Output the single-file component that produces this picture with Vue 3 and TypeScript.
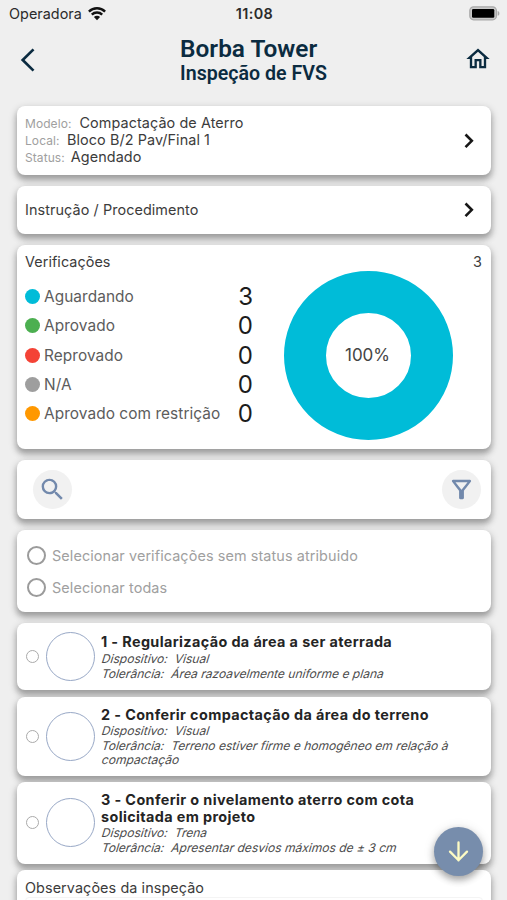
<script setup lang="ts">
interface Info { label: string; value: string; gap: number }
interface Status { label: string; count: number; color: string }
interface Check { title: string[]; device: string; tolerance: string[]; size: string }

const info: Info[] = [
  { label: 'Modelo:', value: 'Compactação de Aterro', gap: 8 },
  { label: 'Local:', value: 'Bloco B/2 Pav/Final 1', gap: 7.5 },
  { label: 'Status:', value: 'Agendado', gap: 6 },
]
const statuses: Status[] = [
  { label: 'Aguardando', count: 3, color: '#00bcd8' },
  { label: 'Aprovado', count: 0, color: '#4caf50' },
  { label: 'Reprovado', count: 0, color: '#f44336' },
  { label: 'N/A', count: 0, color: '#9e9e9e' },
  { label: 'Aprovado com restrição', count: 0, color: '#ff9800' },
]
const selectors: string[] = ['Selecionar verificações sem status atribuido', 'Selecionar todas']
const checks: Check[] = [
  { title: ['1 - Regularização da área a ser aterrada'], device: 'Visual', tolerance: ['Área razoavelmente uniforme e plana'], size: 'short' },
  { title: ['2 - Conferir compactação da área do terreno'], device: 'Visual', tolerance: ['Terreno estiver firme e homogêneo em relação à', 'compactação'], size: 'medium' },
  { title: ['3 - Conferir o nivelamento aterro com cota', 'solicitada em projeto'], device: 'Trena', tolerance: ['Apresentar desvios máximos de ± 3 cm'], size: 'tall' },
]
</script>

<template>
  <div class="screen">
    <div class="statusbar">
      <div class="carrier">
        <span>Operadora</span>
        <svg width="20" height="15" viewBox="0 0 20 15">
          <path d="M1.9 5.6a11.6 11.6 0 0 1 16.2 0M4.8 8.7a7.4 7.4 0 0 1 10.4 0" fill="none" stroke="#111" stroke-width="2.4" />
          <path d="M10 14.2 6.9 11.1a4.4 4.4 0 0 1 6.2 0z" fill="#111" />
        </svg>
      </div>
      <span class="clock">11:08</span>
      <svg class="battery" width="31" height="15" viewBox="0 0 31 15">
        <rect x=".8" y=".8" width="26.6" height="13" rx="3.8" fill="#c9c9c9" stroke="#a9a9a9" stroke-width="1.2" />
        <path d="M28.6 5v4.8c2.4-.6 2.4-4.2 0-4.8z" fill="#aaa" />
        <rect x="3" y="3" width="22.3" height="8.8" rx="1.3" fill="#000" />
      </svg>
    </div>

    <header class="appbar">
      <svg class="back" width="16" height="24" viewBox="0 0 16 24"><path d="M13.5 1.4 2.7 12l10.8 10.6" fill="none" stroke="#0b2b40" stroke-width="2.7" /></svg>
      <div class="titles">
        <h1>Borba Tower</h1>
        <h2>Inspeção de FVS</h2>
      </div>
      <svg class="home" width="28" height="28" viewBox="0 0 24 24"><path d="m12 5.69 5 4.5V18h-2v-6H9v6H7v-7.81l5-4.5M12 3 2 12h3v8h6v-6h2v6h6v-8h3L12 3z" fill="#0b2b40" /></svg>
    </header>

    <main class="cards">
      <section class="card summary">
        <div>
          <div v-for="row in info" :key="row.label" class="info" :style="{ columnGap: row.gap + 'px' }">
            <span class="key">{{ row.label }}</span><span class="value">{{ row.value }}</span>
          </div>
        </div>
        <svg width="10" height="16" viewBox="0 0 10 16"><path d="m1.5 1.5 6.3 6.3-6.3 6.3" fill="none" stroke="#171717" stroke-width="2.6" /></svg>
      </section>

      <section class="card procedure">
        <span class="value">Instrução / Procedimento</span>
        <svg width="10" height="16" viewBox="0 0 10 16"><path d="m1.5 1.5 6.3 6.3-6.3 6.3" fill="none" stroke="#171717" stroke-width="2.6" /></svg>
      </section>

      <section class="card stats">
        <div class="stats-head"><span>Verificações</span><span>3</span></div>
        <div class="stats-body">
          <div class="legend">
            <div v-for="s in statuses" :key="s.label" class="legend-row">
              <i class="dot" :style="{ background: s.color }"></i>
              <span class="legend-label">{{ s.label }}</span>
              <b>{{ s.count }}</b>
            </div>
          </div>
          <div class="donut"><span>100%</span></div>
        </div>
      </section>

      <section class="card tools">
        <span class="tool">
          <svg width="29" height="29" viewBox="0 0 24 24"><path d="M15.5 14h-.79l-.28-.27A6.471 6.471 0 0 0 16 9.5 6.5 6.5 0 1 0 9.5 16c1.61 0 3.09-.59 4.23-1.57l.27.28v.79l5 4.99L20.49 19l-4.99-5zm-6 0C7.01 14 5 11.99 5 9.5S7.01 5 9.5 5 14 7.01 14 9.5 11.99 14 9.5 14z" fill="#7289ac" /></svg>
        </span>
        <span class="tool">
          <svg width="29" height="29" viewBox="0 0 24 24"><path d="M7 6h10l-5.01 6.3L7 6zm-2.75-.39C6.27 8.2 10 13 10 13v6c0 .55.45 1 1 1h2c.55 0 1-.45 1-1v-6s3.72-4.8 5.74-7.39A.998.998 0 0 0 18.95 4H5.04c-.83 0-1.3.95-.79 1.61z" fill="#7289ac" /></svg>
        </span>
      </section>

      <section class="card selection">
        <div v-for="s in selectors" :key="s" class="select-row"><i class="radio"></i><span>{{ s }}</span></div>
      </section>

      <section v-for="c in checks" :key="c.device + c.title[0]" class="card check" :class="c.size">
        <i class="mini"></i>
        <i class="mark"></i>
        <div class="check-text">
          <h3><span v-for="l in c.title" :key="l">{{ l }}</span></h3>
          <p><span>Dispositivo:</span><span class="detail">{{ c.device }}</span></p>
          <p><span>Tolerância:</span><span class="detail">{{ c.tolerance[0] }}</span></p>
          <p v-if="c.tolerance[1]">{{ c.tolerance[1] }}</p>
        </div>
      </section>

      <section class="card notes">
        <span class="value">Observações da inspeção</span>
        <div class="notes-field"></div>
      </section>
    </main>

    <button class="fab" aria-label="Descer">
      <svg width="21" height="22" viewBox="0 0 21 22"><path d="M10.5 1.4v18M2 10.6l8.5 8.6 8.5-8.6" fill="none" stroke="#fdfbc4" stroke-width="2.3" stroke-linecap="round" /></svg>
    </button>
  </div>
</template>

<style>
body { background: #efefef; overflow: hidden; }
</style>

<style scoped>
* { box-sizing: border-box; }
.screen { position: relative; width: 507px; height: 900px; overflow: hidden; background: #efefef; font-family: Inter, "Liberation Sans", sans-serif; color: #3c3c3c; white-space: nowrap; }
svg { display: block; flex: none; }
.statusbar { height: 27px; padding: 0 7px 0 9px; display: grid; grid-template-columns: 1fr auto 1fr; align-items: center; color: #2b2b2b; }
.carrier { display: flex; gap: 6px; align-items: center; font-size: 14.4px; letter-spacing: .03px; }
.carrier svg { margin: -1px 0 0 -1px; }
.clock { font-size: 14.4px; font-weight: 600; letter-spacing: .4px; }
.battery { justify-self: end; margin-top: -1px; }
.appbar { height: 79px; padding: 0 15px 0 20px; display: flex; justify-content: space-between; align-items: flex-start; color: #0b2b40; font-family: Roboto, sans-serif; }
.back { margin-top: 21px; }
.home { margin-top: 18px; }
.titles { padding-top: 7px; margin-left: 7px; }
.titles h1 { margin: 0; font-size: 24.4px; line-height: 29px; font-weight: 600; }
.titles h2 { margin: 0; font-size: 19.6px; line-height: 22px; font-weight: 600; }
.cards { padding: 0 16px 0 17px; display: flex; flex-direction: column; gap: 11px; }
.card { flex: none; background: #fff; border-radius: 8px; box-shadow: 0 4px 5px 0 rgba(0,0,0,.14), 0 6px 7px 0 rgba(0,0,0,.1), 0 3px 7px 2px rgba(0,0,0,.15); }
.summary { height: 69px; padding: 0 17px 0 8px; display: flex; align-items: center; justify-content: space-between; }
.summary > div { margin-top: -2px; }
.info { display: flex; align-items: baseline; height: 17px; line-height: 17px; }
.key { font-size: 12px; color: #a0a0a0; letter-spacing: .08px; }
.value { font-size: 14.4px; letter-spacing: .08px; }
.procedure { height: 48px; padding: 0 17px 0 8px; display: flex; align-items: center; justify-content: space-between; }
.procedure .value { margin-top: -1px; }
.stats { height: 204px; padding: 8px 9px 0 8px; }
.stats-head { height: 18px; line-height: 18px; display: flex; justify-content: space-between; font-size: 14.4px; letter-spacing: .06px; }
.stats-body { display: flex; }
.legend { width: 228px; margin-right: 31px; padding-top: 11px; }
.legend-row { height: 29.3px; display: flex; align-items: center; }
.dot { width: 15px; height: 15px; margin-right: 4px; border-radius: 50%; }
.legend-label { font-size: 15.4px; letter-spacing: .07px; color: #5c5c5c; flex: 1; }
.legend-row b { font-size: 24px; font-weight: 400; color: #1c1c1c; }
.donut { width: 169px; height: 169px; border: 42px solid #00bcd8; border-radius: 50%; display: grid; place-items: center; font-size: 17px; color: #444; }
.donut span { margin: -2px 2px 0 0; }
.tools { height: 59px; padding: 0 10px 0 16px; display: flex; align-items: center; justify-content: space-between; }
.tool { width: 39px; height: 39px; border-radius: 50%; background: #f1f1f1; display: grid; place-items: center; }
.selection { height: 82px; padding: 9px 10px; }
.select-row { height: 32px; display: flex; align-items: center; gap: 6px; font-size: 14.4px; letter-spacing: .1px; color: #a0a0a0; }
.radio { width: 19px; height: 19px; border: 2px solid #9b9b9b; border-radius: 50%; }
.check { display: flex; align-items: center; padding-left: 9px; }
.short { height: 67px; }
.medium { height: 79px; margin-top: -4.5px; }
.tall { height: 82px; margin-top: -5px; }
.mini { width: 13px; height: 13px; margin-right: 7px; border: 1.5px solid #aaa; border-radius: 50%; }
.mark { width: 49px; height: 49px; margin-right: 6px; border: 1.5px solid #98a8c6; border-radius: 50%; }
.check-text { padding-top: 1.5px; }
.check-text h3 { margin: 0 0 1.5px; font-size: 14.4px; line-height: 17px; font-weight: 700; color: #242424; letter-spacing: .38px; }
.check-text h3 span { display: block; }
.check-text p { margin: 0 0 0 1px; font-size: 12px; line-height: 14.6px; color: #4b4b4b; letter-spacing: .02px; transform: skewX(-17deg); }
.detail { margin-left: 7px; }
.notes { height: 70px; margin-top: -5px; padding: 9px 8px; }
.notes .value { display: block; height: 17px; line-height: 17px; }
.notes-field { height: 40px; margin-top: 1px; border: 1px solid #f4f4f4; border-radius: 4px; }
.fab { position: absolute; right: 24px; bottom: 24px; width: 49px; height: 49px; padding: 0; border: 0; border-radius: 50%; background: #778dac; display: grid; place-items: center; box-shadow: 0 4px 7px rgba(0,0,0,.3), 0 1px 12px rgba(0,0,0,.12); }
</style>
